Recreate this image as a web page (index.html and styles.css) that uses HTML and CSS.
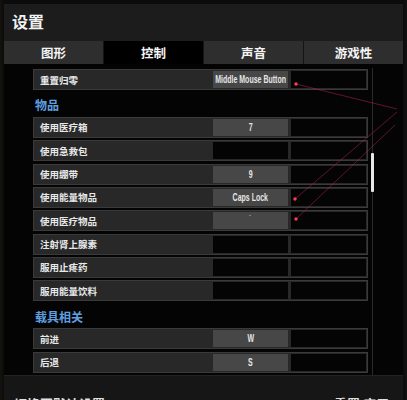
FILE: index.html
```html
<!DOCTYPE html>
<html lang="zh">
<head>
<meta charset="utf-8">
<title>设置</title>
<link rel="stylesheet" href="styles.css">
</head>
<body>
<div class="screen">
  <div class="panel">
    <div class="title">设置</div>
    <div class="tabs">
      <div class="tab">图形</div>
      <div class="tab active">控制</div>
      <div class="tab">声音</div>
      <div class="tab">游戏性</div>
    </div>
    <div class="content">
      <div class="list">
        <div class="row"><div class="label">重置归零</div><div class="key set"><span class="narrow">Middle Mouse Button</span></div><div class="key"></div></div>
        <div class="section">物品</div>
        <div class="row"><div class="label">使用医疗箱</div><div class="key set"><span class="narrow">7</span></div><div class="key"></div></div>
        <div class="row"><div class="label">使用急救包</div><div class="key"></div><div class="key"></div></div>
        <div class="row"><div class="label">使用绷带</div><div class="key set"><span class="narrow">9</span></div><div class="key"></div></div>
        <div class="row"><div class="label">使用能量物品</div><div class="key set"><span class="narrow">Caps Lock</span></div><div class="key"></div></div>
        <div class="row"><div class="label">使用医疗物品</div><div class="key set"><span class="narrow tick">`</span></div><div class="key"></div></div>
        <div class="row"><div class="label">注射肾上腺素</div><div class="key"></div><div class="key"></div></div>
        <div class="row"><div class="label">服用止疼药</div><div class="key"></div><div class="key"></div></div>
        <div class="row"><div class="label">服用能量饮料</div><div class="key"></div><div class="key"></div></div>
        <div class="section second">载具相关</div>
        <div class="row"><div class="label">前进</div><div class="key set"><span class="narrow">W</span></div><div class="key"></div></div>
        <div class="row"><div class="label">后退</div><div class="key set"><span class="narrow">S</span></div><div class="key"></div></div>
      </div>
      <div class="scrollbar"><div class="thumb"></div></div>
    </div>
    <div class="footer">
      <span class="foot-left">切换至默认设置</span>
      <span class="foot-right">重置 应用</span>
    </div>
  </div>
  <svg class="laser" width="407" height="400" viewBox="0 0 407 400">
    <g stroke="rgba(190,35,70,0.5)" stroke-width="1" fill="none">
      <line x1="296" y1="84" x2="397" y2="109"/>
      <line x1="397" y1="112" x2="295" y2="199"/>
      <line x1="395" y1="125" x2="296" y2="219"/>
    </g>
    <g fill="#ff3a5a">
      <circle cx="296" cy="84" r="1.7"/>
      <circle cx="295" cy="199" r="1.7"/>
      <circle cx="296" cy="219" r="1.7"/>
    </g>
  </svg>
</div>
</body>
</html>
```
FILE: styles.css
```css
html, body {
  margin: 0;
  padding: 0;
  background: #0a0a0c;
}
body {
  width: 407px;
  height: 400px;
  overflow: hidden;
  font-family: "Noto Sans CJK SC", "Noto Sans", sans-serif;
  color: #ececec;
}
.screen {
  position: relative;
  width: 407px;
  height: 400px;
  padding: 4px 4px 0 4px;
  box-sizing: border-box;
  background: linear-gradient(90deg, #15120f 0, #0b0b0b 4px, #0b0b0b 403px, #111 407px);
}
.panel {
  display: flex;
  flex-direction: column;
  height: 396px;
  background: #1c1c1c;
}
.title {
  height: 37px;
  box-sizing: border-box;
  padding: 7px 0 0 8px;
  font-size: 16px;
  font-weight: bold;
  line-height: 20px;
  color: #f2f2f2;
}
.tabs {
  display: flex;
  height: 23px;
  gap: 1px;
  background: #141414;
}
.tab {
  flex: 1;
  display: flex;
  align-items: center;
  justify-content: center;
  background: #2e2e2e;
  font-size: 12.5px;
  font-weight: bold;
  color: #f4f4f4;
}
.tab.active {
  background: #000;
}
.content {
  display: flex;
  height: 312px;
  box-sizing: border-box;
  padding-top: 5px;
  overflow: hidden;
  background: #040404;
  border-bottom: 1px solid #222;
}
.list {
  width: 335px;
  margin-left: 29px;
}
.row {
  display: flex;
  height: 21px;
  box-sizing: border-box;
  padding: 1px 1px 1px 0;
  margin-bottom: 2.33px;
  background: #282828;
  border: 1px solid #3a3a3a;
}
.label {
  flex: 1;
  display: flex;
  align-items: center;
  padding-left: 6px;
  font-size: 9.5px;
  font-weight: bold;
  color: #e8e8e8;
}
.key {
  width: 75px;
  margin-left: 3px;
  display: flex;
  align-items: center;
  justify-content: center;
  background: #040404;
}
.key.set {
  background: #474747;
}
.narrow {
  display: inline-block;
  font-family: "Liberation Sans", Arial, sans-serif;
  font-size: 10px;
  font-weight: bold;
  color: #e6e6e6;
  transform: scaleX(0.7);
  white-space: nowrap;
}
.tick {
  margin-top: -6px;
  font-size: 7px;
}
.section {
  height: 24.67px;
  padding-left: 2px;
  display: flex;
  align-items: center;
  font-size: 12px;
  font-weight: bold;
  color: #5f9fe0;
}
.section.second {
  height: 23.67px;
  padding-top: 1px;
}
.scrollbar {
  width: 3px;
  margin-left: 3px;
  margin-top: -1px;
  background: linear-gradient(90deg, transparent 1px, #2a2a2a 1px, #2a2a2a 2px, transparent 2px);
}
.thumb {
  width: 3px;
  height: 39px;
  margin-top: 85px;
  background: #e8e8e8;
  border-radius: 1px;
}
.footer {
  flex: 1;
  display: flex;
  justify-content: space-between;
  padding: 20px 14px 0 10px;
  overflow: hidden;
  background: #161616;
  font-size: 13px;
  font-weight: bold;
  line-height: 16px;
  color: #e0e0e0;
}
.laser {
  position: absolute;
  top: 0;
  left: 0;
  pointer-events: none;
}
```
